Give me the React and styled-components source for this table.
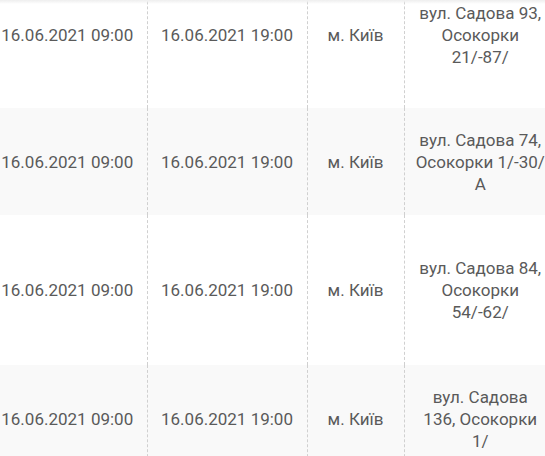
import React from "react";
import styled, { createGlobalStyle } from "styled-components";

const Global = createGlobalStyle`
  html, body { margin: 0; padding: 0; background: #fff; overflow: hidden; }
  body { font-family: Roboto, "Noto Sans", Arial, sans-serif; }
`;

const Viewport = styled.div`
  position: relative;
  width: 545px;
  height: 456px;
  overflow: hidden;
  &::after {
    content: "";
    position: absolute;
    left: 0;
    right: 0;
    top: 0;
    height: 4px;
    background: linear-gradient(#eeeeee, rgba(255, 255, 255, 0));
    pointer-events: none;
  }
`;

const Table = styled.table`
  border-collapse: collapse;
  table-layout: fixed;
  margin-left: -12px;
  margin-top: -38px;
  width: 568px;
`;

const Col = styled.col`
  width: ${(p) => p.$w}px;
`;

const Row = styled.tr`
  background: ${(p) => (p.$shaded ? "#f9f9f9" : "#ffffff")};
  height: ${(p) => p.$h}px;
`;

const Cell = styled.td`
  padding: 0 4px;
  text-align: center;
  vertical-align: middle;
  font-size: 17px;
  line-height: 22px;
  color: #5a5a5a;
  border-left: 1px dashed #d0d0d0;
  white-space: nowrap;
  &:first-child {
    border-left: none;
  }
`;

const AddressCell = styled(Cell)`
  padding: 0 10.5px;
  white-space: normal;
`;

const rows = [
  { h: 146, addr: "вул. Садова 93, Осокорки 21/-87/" },
  { h: 107, addr: "вул. Садова 74, Осокорки 1/-30/ А" },
  { h: 150, addr: "вул. Садова 84, Осокорки 54/-62/" },
  { h: 107, addr: "вул. Садова 136, Осокорки 1/" },
];

export default function App() {
  return (
    <>
      <Global />
      <Viewport>
        <Table>
          <colgroup>
            <Col $w={159} />
            <Col $w={160} />
            <Col $w={97} />
            <Col $w={152} />
          </colgroup>
          <tbody>
            {rows.map((r, i) => (
              <Row key={i} $shaded={i % 2 === 1} $h={r.h}>
                <Cell>16.06.2021 09:00</Cell>
                <Cell>16.06.2021 19:00</Cell>
                <Cell>м. Київ</Cell>
                <AddressCell>{r.addr}</AddressCell>
              </Row>
            ))}
          </tbody>
        </Table>
      </Viewport>
    </>
  );
}
